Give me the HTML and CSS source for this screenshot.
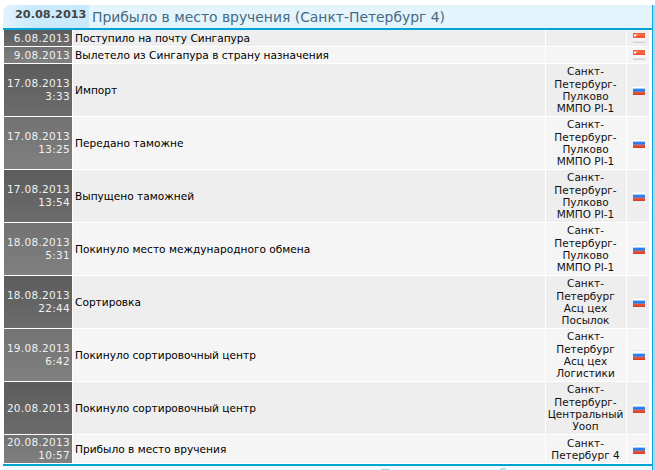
FILE: index.html
```html
<!DOCTYPE html>
<html lang="ru">
<head>
<meta charset="utf-8">
<title>Трекинг</title>
<link rel="stylesheet" href="styles.css">
</head>
<body>
<div class="panel">
  <div class="head"><span class="head-date">20.08.2013</span><span class="head-title">Прибыло в место вручения (Санкт-Петербург 4)</span></div>
  <div class="rows">
    <div class="row"><div class="date">6.08.2013</div><div class="desc">Поступило на почту Сингапура</div><div class="loc"></div><div class="flag"><svg class="ic" viewBox="0 0 12 10"><use href="#sg"/></svg></div></div>
    <div class="row"><div class="date">9.08.2013</div><div class="desc">Вылетело из Сингапура в страну назначения</div><div class="loc"></div><div class="flag"><svg class="ic" viewBox="0 0 12 10"><use href="#sg"/></svg></div></div>
    <div class="row"><div class="date">17.08.2013<br>3:33</div><div class="desc">Импорт</div><div class="loc">Санкт-<br>Петербург-<br>Пулково<br>ММПО PI-1</div><div class="flag"><svg class="ic" viewBox="0 0 12 10"><use href="#ru"/></svg></div></div>
    <div class="row"><div class="date">17.08.2013<br>13:25</div><div class="desc">Передано таможне</div><div class="loc">Санкт-<br>Петербург-<br>Пулково<br>ММПО PI-1</div><div class="flag"><svg class="ic" viewBox="0 0 12 10"><use href="#ru"/></svg></div></div>
    <div class="row"><div class="date">17.08.2013<br>13:54</div><div class="desc">Выпущено таможней</div><div class="loc">Санкт-<br>Петербург-<br>Пулково<br>ММПО PI-1</div><div class="flag"><svg class="ic" viewBox="0 0 12 10"><use href="#ru"/></svg></div></div>
    <div class="row"><div class="date">18.08.2013<br>5:31</div><div class="desc">Покинуло место международного обмена</div><div class="loc">Санкт-<br>Петербург-<br>Пулково<br>ММПО PI-1</div><div class="flag"><svg class="ic" viewBox="0 0 12 10"><use href="#ru"/></svg></div></div>
    <div class="row"><div class="date">18.08.2013<br>22:44</div><div class="desc">Сортировка</div><div class="loc">Санкт-<br>Петербург<br>Асц цех<br>Посылок</div><div class="flag"><svg class="ic" viewBox="0 0 12 10"><use href="#ru"/></svg></div></div>
    <div class="row"><div class="date">19.08.2013<br>6:42</div><div class="desc">Покинуло сортировочный центр</div><div class="loc">Санкт-<br>Петербург<br>Асц цех<br>Логистики</div><div class="flag"><svg class="ic" viewBox="0 0 12 10"><use href="#ru"/></svg></div></div>
    <div class="row"><div class="date">20.08.2013</div><div class="desc">Покинуло сортировочный центр</div><div class="loc">Санкт-<br>Петербург-<br>Центральный<br>Уооп</div><div class="flag"><svg class="ic" viewBox="0 0 12 10"><use href="#ru"/></svg></div></div>
    <div class="row"><div class="date">20.08.2013<br>10:57</div><div class="desc">Прибыло в место вручения</div><div class="loc">Санкт-<br>Петербург 4</div><div class="flag"><svg class="ic" viewBox="0 0 12 10"><use href="#ru"/></svg></div></div>
  </div>
  <div class="foot">Показать все события</div>
</div>
<svg class="defs" width="0" height="0">
  <defs>
    <linearGradient id="shade" x1="0" y1="0" x2="0" y2="1">
      <stop offset="0" stop-color="#999" stop-opacity=".3"/>
      <stop offset=".2" stop-color="#fff" stop-opacity=".2"/>
      <stop offset=".6" stop-color="#fff" stop-opacity="0"/>
      <stop offset="1" stop-color="#000" stop-opacity=".2"/>
    </linearGradient>
    <g id="sg">
      <rect width="12" height="5" fill="#f9431a"/>
      <rect y="5" width="12" height="5" fill="#f8f8f8"/>
      <rect x="1" y="1.5" width="2" height="2" fill="#fff"/>
      <rect x="3.5" y="1" width="1" height="1" fill="#ffd0c4"/>
      <rect width="12" height="10" fill="url(#shade)"/>
    </g>
    <g id="ru">
      <rect width="12" height="3.6" fill="#fff"/>
      <rect y="3.6" width="12" height="3.2" fill="#1f78f0"/>
      <rect y="6.8" width="12" height="3.2" fill="#f6492a"/>
      <rect width="12" height="10" fill="url(#shade)"/>
    </g>
  </defs>
</svg>
</body>
</html>
```
FILE: styles.css
```css
html, body { margin: 0; padding: 0; background: #fff; }
body { height: 470px; overflow: hidden; font-family: "DejaVu Sans", Verdana, sans-serif; font-size: 10.5px; color: #111; }
.panel { margin: 5px 0 0 3px; width: 649px; height: 465px; overflow: hidden; background: #e3f4fd; border-right: 1px solid #12a4d6; box-shadow: 2px 0 0 #a9d8ee; border-top-left-radius: 8px; }
.head { display: flex; align-items: stretch; height: 23px; border-bottom: 2px solid #00a5d6; }
.head-date { width: 86px; padding-left: 12px; box-sizing: border-box; font-weight: bold; font-size: 11.3px; line-height: 20px; color: #444; background: linear-gradient(90deg, #e3f4fd, #cbebfc 30%, #c9eafc); }
.head-title { padding-left: 3px; font-size: 13.9px; line-height: 24px; color: #466a80; white-space: nowrap; }
.rows { display: flex; flex-direction: column; background: #fff; border-bottom: 2px solid #00a5d6; padding-left: 1px; padding-bottom: 1px; }
.row { display: grid; grid-template-columns: 68px 472px 80px 22px; column-gap: 1px; margin-top: 1px; min-height: 16px; background: #fff; }
.row:first-child { margin-top: 0; }
.row:nth-child(n+3):not(:last-child) { height: 52px; }
.row:last-child { height: 28px; }
.date { display: flex; align-items: center; justify-content: flex-end; text-align: right; color: #f0f0f0; background: linear-gradient(#5c5c5c, #6c6c6c); padding-right: 2px; line-height: 13px; letter-spacing: 0.3px; }
.row:nth-child(even) .date { background: linear-gradient(#727272, #808080); }
.row:nth-child(odd) > .desc, .row:nth-child(odd) > .loc, .row:nth-child(odd) > .flag { background: #eee; }
.row:nth-child(even) > .desc, .row:nth-child(even) > .loc, .row:nth-child(even) > .flag { background: #f5f5f5; }
.desc { display: flex; align-items: center; padding-left: 2px; line-height: 13px; font-size: 10.6px; color: #000; }
.loc { display: flex; align-items: center; justify-content: center; text-align: center; line-height: 12.33px; padding-right: 1px; }
.flag { display: flex; align-items: center; justify-content: center; padding-left: 1px; }
.ic { width: 12px; height: 10px; display: block; }
.defs { position: absolute; }
.foot { height: 30px; padding-left: 377px; background: #eff9fe; color: #9cd0ea; font-size: 14px; line-height: 16px; white-space: nowrap; }
```
